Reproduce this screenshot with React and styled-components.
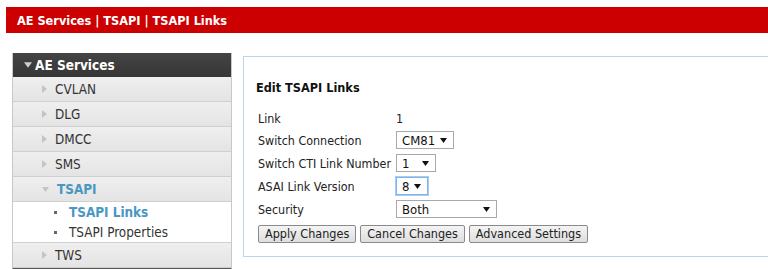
import React from "react";
import styled, { createGlobalStyle } from "styled-components";

const Global = createGlobalStyle`
  html, body { margin: 0; padding: 0; background: #fff; }
  body {
    font-family: "DejaVu Sans Condensed", "DejaVu Sans", sans-serif;
    font-stretch: condensed;
    font-size: 12px;
    color: #333;
    overflow: hidden;
  }
`;

const Page = styled.div`
  width: 768px;
  height: 269px;
  padding: 7px 0 0 6px;
  box-sizing: border-box;
  overflow: hidden;
`;

const Banner = styled.div`
  height: 26px;
  background: #cc0000;
  color: #fff;
  font-weight: bold;
  font-size: 12.6px;
  line-height: 26px;
  padding-left: 11px;
  padding-top: 1px;
  box-sizing: border-box;
`;

const Main = styled.div`
  display: flex;
  align-items: flex-start;
  gap: 11px;
  margin-top: 20px;
  padding-left: 6px;
`;

const Sidebar = styled.nav`
  width: 220px;
  flex: none;
  border-left: 1px solid #c8c8c8;
  border-right: 1px solid #c8c8c8;
  border-bottom: 2px solid #555;
  box-sizing: border-box;
`;

const SideHeader = styled.div`
  height: 24px;
  background: linear-gradient(#444, #363636);
  color: #fff;
  font-weight: bold;
  font-size: 13.5px;
  display: flex;
  align-items: center;
  padding-left: 11px;
  gap: 3px;
`;

const SideItem = styled.div`
  height: 24px;
  border-bottom: 1px solid #cfcfcf;
  background: linear-gradient(#efefef, #e4e4e4);
  display: flex;
  align-items: center;
  padding-left: 29px;
  gap: 8px;
  color: ${(p) => (p.$active ? "#4a97c2" : "#333")};
  font-weight: ${(p) => (p.$active ? "bold" : "normal")};
  font-size: 13.4px;
`;

const SubMenu = styled.div`
  background: #fff;
  border-bottom: 1px solid #cfcfcf;
  display: flex;
  flex-direction: column;
`;

const SubItem = styled.div`
  height: 20px;
  display: flex;
  align-items: center;
  padding-left: 41px;
  gap: 12px;
  color: ${(p) => (p.$active ? "#4a97c2" : "#333")};
  font-weight: ${(p) => (p.$active ? "bold" : "normal")};
  font-size: 13.4px;
`;

const Bullet = styled.span`
  width: 3px;
  height: 3px;
  background: #666;
  flex: none;
`;

const Panel = styled.section`
  flex: 1;
  margin-top: 3px;
  height: 201px;
  box-sizing: border-box;
  border: 1px solid #bcd5f0;
  border-right: none;
  margin-right: -10px;
  padding: 23px 0 0 12px;
`;

const Title = styled.h2`
  margin: 0 0 16px 0;
  font-size: 12.6px;
  font-weight: bold;
  color: #111;
`;

const Form = styled.div`
  display: grid;
  grid-template-columns: 138px auto;
  justify-content: start;
  row-gap: 5px;
  padding-left: 2px;
`;

const Label = styled.div`
  display: flex;
  align-items: center;
  min-height: ${(p) => (p.$short ? "14px" : "18px")};
  font-size: 12.4px;
  color: #222;
`;

const Value = styled.div`
  display: flex;
  align-items: center;
  font-size: 12.4px;
  color: #222;
`;

const Select = styled.div`
  display: flex;
  align-items: center;
  justify-content: space-between;
  width: ${(p) => p.$w}px;
  height: 18px;
  box-sizing: border-box;
  border: 1px solid ${(p) => (p.$focus ? "#7eb4ea" : "#a9a9a9")};
  box-shadow: ${(p) => (p.$focus ? "0 0 0 1px #a9cdf2" : "none")};
  padding: 0 6px 0 5px;
  font-size: 13px;
  color: #111;
  background: #fff;
`;

const Buttons = styled.div`
  display: flex;
  gap: 4px;
  margin-top: 7px;
  padding-left: 2px;
`;

const Button = styled.button`
  height: 18px;
  padding: 0 6px;
  font-family: inherit;
  font-stretch: condensed;
  font-size: 12.5px;
  color: #222;
  border: 1px solid #8a8a8a;
  border-radius: 2px;
  background: linear-gradient(#f4f4f4, #dedede);
  line-height: 16px;
`;

const Caret = ({ color = "#111", dir = "down", size = 7 }) =>
  dir === "down" ? (
    <svg width={size} height={size - 2} viewBox="0 0 7 5">
      <polygon points="0,0 7,0 3.5,5" fill={color} />
    </svg>
  ) : (
    <svg width="5" height="8" viewBox="0 0 5 8">
      <polygon points="0,0 5,4 0,8" fill={color} />
    </svg>
  );

export default function App() {
  const items = ["CVLAN", "DLG", "DMCC", "SMS"];
  return (
    <Page>
      <Global />
      <Banner>AE Services | TSAPI | TSAPI Links</Banner>
      <Main>
        <Sidebar>
          <SideHeader>
            <Caret color="#cfcfcf" size={8} />
            AE Services
          </SideHeader>
          {items.map((t) => (
            <SideItem key={t}>
              <Caret dir="right" color="#c4c4c4" />
              {t}
            </SideItem>
          ))}
          <SideItem $active>
            <Caret color="#c4c4c4" />
            TSAPI
          </SideItem>
          <SubMenu>
            <SubItem $active>
              <Bullet />
              TSAPI Links
            </SubItem>
            <SubItem>
              <Bullet />
              TSAPI Properties
            </SubItem>
          </SubMenu>
          <SideItem>
            <Caret dir="right" color="#c4c4c4" />
            TWS
          </SideItem>
        </Sidebar>
        <Panel>
          <Title>Edit TSAPI Links</Title>
          <Form>
            <Label $short>Link</Label>
            <Value>1</Value>
            <Label>Switch Connection</Label>
            <Value>
              <Select $w={58}>
                CM81 <Caret />
              </Select>
            </Value>
            <Label>Switch CTI Link Number</Label>
            <Value>
              <Select $w={40}>
                1 <Caret />
              </Select>
            </Value>
            <Label>ASAI Link Version</Label>
            <Value>
              <Select $w={32} $focus>
                8 <Caret />
              </Select>
            </Value>
            <Label>Security</Label>
            <Value>
              <Select $w={101}>
                Both <Caret />
              </Select>
            </Value>
          </Form>
          <Buttons>
            <Button>Apply Changes</Button>
            <Button>Cancel Changes</Button>
            <Button>Advanced Settings</Button>
          </Buttons>
        </Panel>
      </Main>
    </Page>
  );
}
